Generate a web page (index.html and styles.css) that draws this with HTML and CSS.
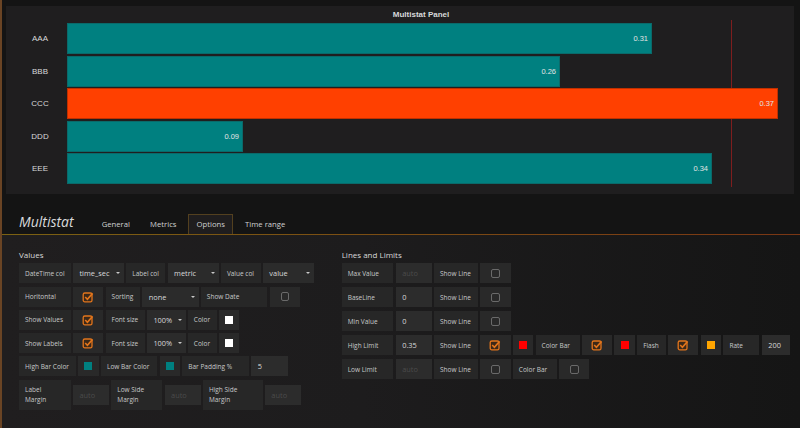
FILE: index.html
```html
<!DOCTYPE html>
<html>
<head>
<meta charset="utf-8">
<title>Multistat</title>
<link rel="stylesheet" href="styles.css">
</head>
<body>
<div class="page">
  <section class="panel">
    <div class="panel-title">Multistat Panel</div>
    <div class="chart">
      <div class="bar-row"><div class="bar-label">AAA</div><div class="bar" style="width:585px">0.31</div></div>
      <div class="bar-row"><div class="bar-label">BBB</div><div class="bar" style="width:493px">0.26</div></div>
      <div class="bar-row"><div class="bar-label">CCC</div><div class="bar hot" style="width:711px">0.37</div></div>
      <div class="bar-row"><div class="bar-label">DDD</div><div class="bar" style="width:176px">0.09</div></div>
      <div class="bar-row"><div class="bar-label">EEE</div><div class="bar" style="width:645px">0.34</div></div>
    </div>
    <div class="limit-line"></div>
  </section>

  <div class="editor">
    <div class="editor-head">
      <h2 class="editor-title">Multistat</h2>
      <nav class="tabs">
        <span class="tab">General</span>
        <span class="tab">Metrics</span>
        <span class="tab active">Options</span>
        <span class="tab">Time range</span>
      </nav>
    </div>

    <div class="editor-body">
      <div class="section values">
        <h3>Values</h3>
        <div class="rows">
          <div class="row">
            <div class="cell lbl w52">DateTime col</div>
            <div class="cell sel w51">time_sec</div>
            <div class="cell lbl w39">Label col</div>
            <div class="cell sel w51">metric</div>
            <div class="cell lbl w40">Value col</div>
            <div class="cell sel w51">value</div>
          </div>
          <div class="row">
            <div class="cell lbl w52">Horitontal</div>
            <div class="cell chk w30"><svg class="tick" viewBox="0 0 12 12" width="12" height="12"><rect x="1.2" y="2" width="8.8" height="8.8" rx="1.6" fill="#3b2818" stroke="#e2751c" stroke-width="1.3"/><path d="M3.2 6 L5.4 8.3 L10.6 2.4" fill="none" stroke="#e2751c" stroke-width="1.6"/></svg></div>
            <div class="cell lbl w34">Sorting</div>
            <div class="cell sel w56">none</div>
            <div class="cell lbl w66">Show Date</div>
            <div class="cell chk w30"><span class="box"></span></div>
          </div>
          <div class="row">
            <div class="cell lbl w52">Show Values</div>
            <div class="cell chk w30"><svg class="tick" viewBox="0 0 12 12" width="12" height="12"><rect x="1.2" y="2" width="8.8" height="8.8" rx="1.6" fill="#3b2818" stroke="#e2751c" stroke-width="1.3"/><path d="M3.2 6 L5.4 8.3 L10.6 2.4" fill="none" stroke="#e2751c" stroke-width="1.6"/></svg></div>
            <div class="cell lbl w39">Font size</div>
            <div class="cell sel w38">100%</div>
            <div class="cell lbl w29">Color</div>
            <div class="cell clr w20"><span class="swatch sw-white"></span></div>
          </div>
          <div class="row">
            <div class="cell lbl w52">Show Labels</div>
            <div class="cell chk w30"><svg class="tick" viewBox="0 0 12 12" width="12" height="12"><rect x="1.2" y="2" width="8.8" height="8.8" rx="1.6" fill="#3b2818" stroke="#e2751c" stroke-width="1.3"/><path d="M3.2 6 L5.4 8.3 L10.6 2.4" fill="none" stroke="#e2751c" stroke-width="1.6"/></svg></div>
            <div class="cell lbl w39">Font size</div>
            <div class="cell sel w38">100%</div>
            <div class="cell lbl w29">Color</div>
            <div class="cell clr w20"><span class="swatch sw-white"></span></div>
          </div>
          <div class="row">
            <div class="cell lbl w57">High Bar Color</div>
            <div class="cell clr w20"><span class="swatch sw-teal"></span></div>
            <div class="cell lbl w56">Low Bar Color</div>
            <div class="cell clr w20"><span class="swatch sw-teal"></span></div>
            <div class="cell lbl w66">Bar Padding %</div>
            <div class="cell inp w37">5</div>
          </div>
          <div class="row tall">
            <div class="cell lbl w52">Label<br>Margin</div>
            <div class="cell inp ph w36">auto</div>
            <div class="cell lbl w51">Low Side<br>Margin</div>
            <div class="cell inp ph w36">auto</div>
            <div class="cell lbl w60">High Side<br>Margin</div>
            <div class="cell inp ph w36">auto</div>
          </div>
        </div>
      </div>

      <div class="section limits">
        <h3>Lines and Limits</h3>
        <div class="rows">
          <div class="row">
            <div class="cell lbl w52">Max Value</div>
            <div class="cell inp ph w36">auto</div>
            <div class="cell lbl w44">Show Line</div>
            <div class="cell chk w30"><span class="box"></span></div>
          </div>
          <div class="row">
            <div class="cell lbl w52">BaseLine</div>
            <div class="cell inp w36">0</div>
            <div class="cell lbl w44">Show Line</div>
            <div class="cell chk w30"><span class="box"></span></div>
          </div>
          <div class="row">
            <div class="cell lbl w52">Min Value</div>
            <div class="cell inp w36">0</div>
            <div class="cell lbl w44">Show Line</div>
            <div class="cell chk w30"><span class="box"></span></div>
          </div>
          <div class="row">
            <div class="cell lbl w52">High Limit</div>
            <div class="cell inp w36">0.35</div>
            <div class="cell lbl w44">Show Line</div>
            <div class="cell chk w30"><svg class="tick" viewBox="0 0 12 12" width="12" height="12"><rect x="1.2" y="2" width="8.8" height="8.8" rx="1.6" fill="#3b2818" stroke="#e2751c" stroke-width="1.3"/><path d="M3.2 6 L5.4 8.3 L10.6 2.4" fill="none" stroke="#e2751c" stroke-width="1.6"/></svg></div>
            <div class="cell clr w20"><span class="swatch sw-red"></span></div>
            <div class="cell lbl w44">Color Bar</div>
            <div class="cell chk w30"><svg class="tick" viewBox="0 0 12 12" width="12" height="12"><rect x="1.2" y="2" width="8.8" height="8.8" rx="1.6" fill="#3b2818" stroke="#e2751c" stroke-width="1.3"/><path d="M3.2 6 L5.4 8.3 L10.6 2.4" fill="none" stroke="#e2751c" stroke-width="1.6"/></svg></div>
            <div class="cell clr w20"><span class="swatch sw-red"></span></div>
            <div class="cell lbl w29">Flash</div>
            <div class="cell chk w30"><svg class="tick" viewBox="0 0 12 12" width="12" height="12"><rect x="1.2" y="2" width="8.8" height="8.8" rx="1.6" fill="#3b2818" stroke="#e2751c" stroke-width="1.3"/><path d="M3.2 6 L5.4 8.3 L10.6 2.4" fill="none" stroke="#e2751c" stroke-width="1.6"/></svg></div>
            <div class="cell clr w20"><span class="swatch sw-orange"></span></div>
            <div class="cell lbl w36">Rate</div>
            <div class="cell inp w29">200</div>
          </div>
          <div class="row">
            <div class="cell lbl w52">Low Limit</div>
            <div class="cell inp ph w36">auto</div>
            <div class="cell lbl w44">Show Line</div>
            <div class="cell chk w30"><span class="box"></span></div>
            <div class="cell lbl w44">Color Bar</div>
            <div class="cell chk w30"><span class="box"></span></div>
          </div>
        </div>
      </div>
    </div>
  </div>
</div>
</body>
</html>
```

FILE: styles.css
```css
* { box-sizing: border-box; }
html, body { margin: 0; padding: 0; }
body {
  width: 800px;
  height: 428px;
  overflow: hidden;
  background: #141414;
  font-family: "Open Sans", "Liberation Sans", sans-serif;
  color: #d8d9da;
}
.page {
  height: 428px;
  border-left: 2px solid #6a4424;
  display: flex;
  flex-direction: column;
}

/* ---- panel ---- */
.panel {
  position: relative;
  margin: 6px 6px 0 4px;
  height: 188px;
  background: #1f1e1f;
  display: flex;
  flex-direction: column;
}
.panel-title {
  height: 17px;
  padding: 0 19px 0 61px;
  text-align: center;
  font: bold 8px/17px "Liberation Sans", Arial, sans-serif;
  color: #d8d9da;
}
.chart {
  position: relative;
  z-index: 1;
  display: flex;
  flex-direction: column;
  gap: 1.6px;
}
.bar-row {
  display: flex;
  align-items: center;
  height: 31px;
}
.bar-label {
  width: 61px;
  padding-left: 7px;
  text-align: center;
  font: 8px "Liberation Sans", Arial, sans-serif;
  color: #d8d9da;
}
.bar {
  height: 31px;
  border: 1px solid #0a6a6a;
  background: #008080;
  display: flex;
  align-items: center;
  justify-content: flex-end;
  padding-right: 3px;
  font: 7.5px "Liberation Sans", Arial, sans-serif;
  color: #e2e4e4;
}
.bar.hot {
  background: #ff4000;
  border-color: #c03000;
}
.limit-line {
  position: absolute;
  left: 725px;
  top: 14px;
  width: 1px;
  height: 167px;
  background: #7e1e1e;
}

/* ---- editor ---- */
.editor {
  flex: 1;
  display: flex;
  flex-direction: column;
}
.editor-head {
  height: 41px;
  display: flex;
  align-items: flex-end;
  padding-left: 17px;
  border-bottom: 1px solid #7a4a14;
  border-image: linear-gradient(90deg, #7c6212, #7a3614) 1;
}
.editor-title {
  width: 74.4px;
  margin: 0 0 4px;
  font-size: 14px;
  line-height: 16px;
  font-style: italic;
  font-weight: 400;
  color: #d8d9da;
}
.tabs {
  display: flex;
  gap: 3.5px;
}
.tab {
  height: 20px;
  padding: 0 7.3px;
  border: 1px solid transparent;
  border-bottom: 0;
  font-size: 7.7px;
  line-height: 19px;
  color: #d0d1d2;
}
.tab.active {
  background: #1f1d1e;
  border-color: #53401f;
}

.editor-body {
  flex: 1;
  display: flex;
  padding: 13px 0 0 17px;
  background: linear-gradient(90deg, #201e1f 0%, #1d1c1d 45%, #151515 100%);
}
.section.values { width: 322.7px; flex: none; }
.section h3 {
  margin: 0 0 2.3px;
  height: 13px;
  font-size: 8px;
  line-height: 13px;
  font-weight: 400;
  color: #d8d9da;
}
.rows {
  display: flex;
  flex-direction: column;
  gap: 3.3px;
}
.limits .rows { gap: 4px; }
.row {
  display: flex;
  gap: 2.3px;
  height: 20px;
}
.row.tall {
  height: 30px;
  align-items: center;
}
.cell {
  flex: none;
  height: 20px;
  display: flex;
  align-items: center;
}
.lbl {
  background: #272727;
  padding-left: 6px;
  font-size: 6.5px;
  color: #c8c9ca;
}
.row.tall .lbl {
  height: 30px;
  line-height: 10px;
}
.sel {
  background: #2b2b2b;
  padding: 0 4px 0 6.5px;
  justify-content: space-between;
  font-size: 7.4px;
  color: #d8d9da;
}
.sel::after {
  content: "";
  border-left: 2px solid transparent;
  border-right: 2px solid transparent;
  border-top: 2.5px solid #c8c8c8;
}
.inp {
  background: #2c2c2c;
  padding-left: 6.5px;
  font-size: 7.4px;
  color: #d8d9da;
}
.inp.ph { color: #4b4b4b; }
.chk, .clr {
  justify-content: center;
  background: #292929;
}
.box {
  width: 8.6px;
  height: 8.6px;
  border: 1px solid #6a6a6a;
  border-radius: 2px;
}
.tick { display: block; }
.swatch { width: 8px; height: 8px; }
.sw-white { background: #ffffff; }
.sw-teal { background: #008080; }
.sw-red { background: #ff0000; }
.sw-orange { background: #ffa500; }

/* widths */
.w20 { width: 20.4px; }
.w29 { width: 28.7px; }
.w30 { width: 30.3px; }
.w34 { width: 34.4px; }
.w36 { width: 36px; }
.w37 { width: 36.7px; }
.w38 { width: 38.7px; }
.w39 { width: 39px; }
.w40 { width: 39.7px; }
.w44 { width: 44px; }
.w51 { width: 51px; }
.w52 { width: 51.7px; }
.w56 { width: 56.3px; }
.w57 { width: 57px; }
.w60 { width: 59.7px; }
.w66 { width: 66.6px; }
```
